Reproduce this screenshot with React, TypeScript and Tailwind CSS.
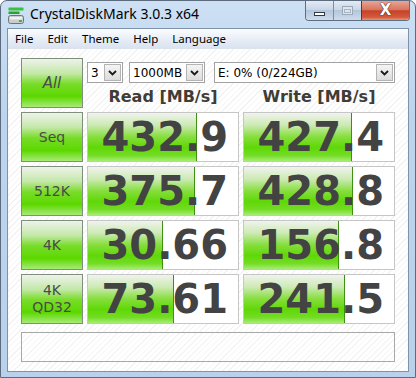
import React from 'react';

type Row = {
  label: string[];
  read: string;
  readFill: number;
  write: string;
  writeFill: number;
};

const rows: Row[] = [
  { label: ['Seq'], read: '432.9', readFill: 109, write: '427.4', writeFill: 108 },
  { label: ['512K'], read: '375.7', readFill: 107, write: '428.8', writeFill: 109 },
  { label: ['4K'], read: '30.66', readFill: 75, write: '156.8', writeFill: 95 },
  { label: ['4K', 'QD32'], read: '73.61', readFill: 86, write: '241.5', writeFill: 101 },
];

const greenBtn =
  'border border-[#7f8f7b] bg-[linear-gradient(to_bottom,#eef2ec_0%,#c4e8a8_30%,#78dc28_52%,#5cd800_78%,#a8ea78_100%)]';

function AppIcon() {
  return (
    <svg width="17" height="18" viewBox="0 0 17 18">
      <rect x="0.5" y="0.5" width="15" height="3" rx="0.5" fill="#36c23a" />
      <rect x="0.5" y="4.5" width="11" height="2.5" rx="0.5" fill="#2aa22e" />
      <rect x="0.5" y="8.5" width="15" height="8" rx="2" fill="#c9cdd0" stroke="#6f7478" />
      <rect x="2" y="10" width="12" height="2.5" fill="#eef0f2" />
      <rect x="11" y="13" width="3" height="2" fill="#3ab83e" />
    </svg>
  );
}

function Chevron() {
  return (
    <svg width="9" height="6" viewBox="0 0 9 6">
      <path d="M1 1 L4.5 4.5 L8 1" fill="none" stroke="#1a1a1a" strokeWidth="1.8" />
    </svg>
  );
}

function Combo({ text, w }: { text: string; w: string }) {
  return (
    <div className={`${w} h-[21px] flex items-stretch border border-[#a3a3a3] bg-white`}>
      <div className="flex-1 flex items-center pl-[3px] text-[12px] text-black font-['DejaVu_Sans',sans-serif] leading-none overflow-hidden whitespace-nowrap">
        {text}
      </div>
      <div className="w-[17px] m-[1px] flex items-center justify-center border border-[#b4b4b4] bg-[linear-gradient(to_bottom,#f4f4f4,#dcdcdc)]">
        <Chevron />
      </div>
    </div>
  );
}

function ValueCell({ value, fill }: { value: string; fill: number }) {
  return (
    <div className="relative h-[50px] border border-[#c6c6c6] bg-white overflow-hidden">
      <div
        className="absolute left-0 top-0 bottom-0 border-r border-[#3f8f12] bg-[linear-gradient(to_bottom,#f0f3ee_0%,#cdeab4_25%,#86de3c_50%,#5fd806_72%,#72dc22_88%,#a6ec72_100%)]"
        style={{ width: fill }}
      />
      <div className="relative h-full flex items-center justify-end pr-[10px] text-[40px] font-bold leading-none text-[#434343] font-['DejaVu_Sans',sans-serif]">
        {value}
      </div>
    </div>
  );
}

export default function App() {
  return (
    <div className="w-[416px] h-[378px] bg-white">
      <div className="w-full h-full flex flex-col rounded-t-[7px] border border-[#5c6b7e] bg-[linear-gradient(to_bottom,#cde0f4,#bcd4ed_30%,#b9d1ea)]">
        {/* title bar */}
        <div className="h-[27px] flex items-start">
          <div className="mt-[6px] ml-[7px]">
            <AppIcon />
          </div>
          <div className="ml-[5px] mt-[4px] text-[14px] leading-[18px] text-black font-['Noto_Sans',sans-serif]">
            CrystalDiskMark 3.0.3 x64
          </div>
          <div className="ml-auto mr-[5px] flex h-[20px] rounded-b-[4px] border border-t-0 border-[#5f6f83] overflow-hidden">
            <div className="w-[27px] flex items-center justify-center bg-[linear-gradient(to_bottom,#e3ebf5,#c9d7e8_45%,#b4c6dc_50%,#cddbec)]">
              <div className="w-[11px] h-[4px] bg-white border border-[#2f3a48] mt-[6px]" />
            </div>
            <div className="w-[28px] flex items-center justify-center border-l border-[#7f8fa3] bg-[linear-gradient(to_bottom,#e3ebf5,#c9d7e8_45%,#b4c6dc_50%,#cddbec)]">
              <div className="w-[11px] h-[9px] border border-[#9aa8b8] bg-[#dde6f0] flex items-center justify-center">
                <div className="w-[7px] h-[4px] border border-[#a8b4c2]" />
              </div>
            </div>
            <div className="w-[48px] flex items-center justify-center border-l border-[#7a2e22] bg-[linear-gradient(to_bottom,#eaa594,#d7765f_45%,#c7432a_52%,#d4583c_85%,#e29a74)]">
              <span className="text-[15px] font-bold leading-none text-white font-['DejaVu_Sans',sans-serif] [text-shadow:0_0_1px_#3a1a14,0_0_1px_#3a1a14]">
                X
              </span>
            </div>
          </div>
        </div>

        {/* inner frame */}
        <div className="flex-1 mx-[6px] mb-[5px] flex flex-col border border-[#7e92aa] bg-white">
          {/* menu bar */}
          <div className="h-[20px] flex items-center border-b border-[#dde3ea] bg-[linear-gradient(to_bottom,#fbfcfe,#e6ecf5_60%,#dae3f0)] text-[11.5px] text-black font-['Noto_Sans',sans-serif]">
            {['File', 'Edit', 'Theme', 'Help', 'Language'].map((m) => (
              <span key={m} className="px-[7px] leading-none pt-[1px]">
                {m}
              </span>
            ))}
          </div>

          {/* client area */}
          <div className="flex-1 pt-[9px] px-[13px] bg-[repeating-linear-gradient(135deg,#ffffff_0px,#ffffff_3px,#f3f3f3_3px,#f3f3f3_4px)]">
            <div className="grid grid-cols-[62px_152px_152px] gap-[4px]">
              {/* top row */}
              <div className={`h-[50px] flex items-center justify-center ${greenBtn}`}>
                <span className="text-[15px] italic text-[#4a4a4a] font-['DejaVu_Sans',sans-serif]">All</span>
              </div>
              <div className="col-span-2 h-[50px] flex flex-col">
                <div className="mt-[4px] flex items-center">
                  <Combo text="3" w="w-[36px]" />
                  <div className="w-[6px]" />
                  <Combo text="1000MB" w="w-[76px]" />
                  <div className="w-[9px]" />
                  <Combo text="E: 0% (0/224GB)" w="w-[181px]" />
                </div>
                <div className="flex-1 grid grid-cols-2 gap-[4px] items-center">
                  <div className="text-center text-[16px] font-bold text-[#403c36] font-['DejaVu_Sans',sans-serif] leading-none pt-[2px]">
                    Read [MB/s]
                  </div>
                  <div className="text-center text-[16px] font-bold text-[#403c36] font-['DejaVu_Sans',sans-serif] leading-none pt-[2px]">
                    Write [MB/s]
                  </div>
                </div>
              </div>

              {rows.map((r) => (
                <React.Fragment key={r.read}>
                  <div className={`h-[50px] flex flex-col items-center justify-center ${greenBtn}`}>
                    {r.label.map((l) => (
                      <span key={l} className="text-[14px] leading-[17px] text-[#4a4a4a] font-['DejaVu_Sans',sans-serif]">
                        {l}
                      </span>
                    ))}
                  </div>
                  <ValueCell value={r.read} fill={r.readFill} />
                  <ValueCell value={r.write} fill={r.writeFill} />
                </React.Fragment>
              ))}
            </div>

            <div className="mt-[8px] h-[30px] border border-[#a8a8a8] bg-[repeating-linear-gradient(135deg,#ffffff_0px,#ffffff_3px,#f5f5f5_3px,#f5f5f5_4px)]" />
          </div>
        </div>
      </div>
    </div>
  );
}
